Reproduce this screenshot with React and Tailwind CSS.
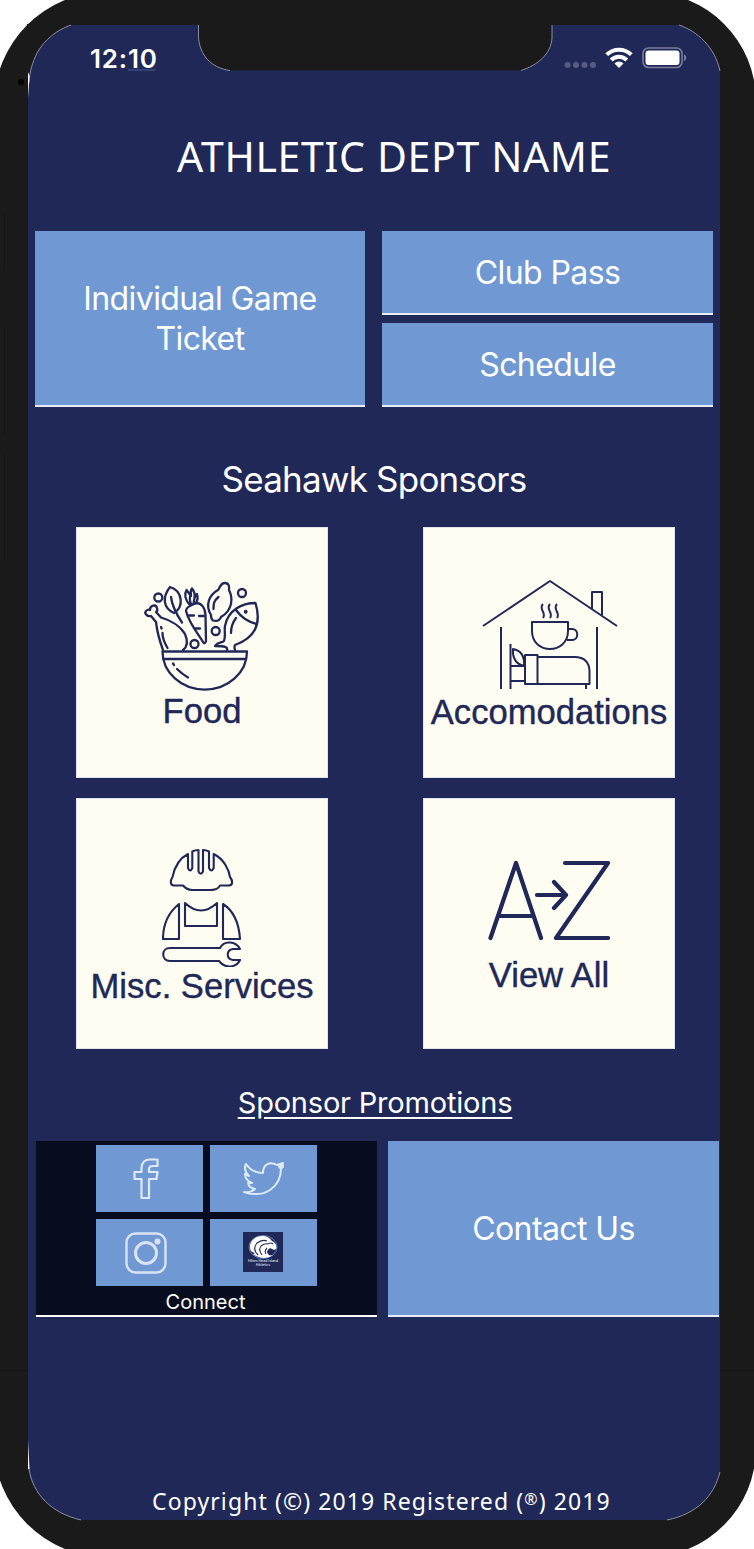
import clsx from 'clsx'

function StatusBar() {
  return (
    <div className="flex h-[85px] items-start justify-between pl-[62px] pr-[33px]">
      <span className="mt-[15px] font-['Inter'] text-[26px] font-semibold leading-[38px] tracking-[0.8px]">12:10</span>
      <div className="mt-[22px] flex items-start">
        <svg width="32" height="22" viewBox="0 0 32 22" fill="#555c82">
          <circle cx="3.5" cy="18" r="3" />
          <circle cx="12" cy="18" r="3" />
          <circle cx="20.5" cy="18" r="3" />
          <circle cx="29" cy="18" r="3" />
        </svg>
        <svg className="ml-[9px]" width="28" height="22" viewBox="0 0 28 22" fill="none" stroke="#fff" strokeWidth="4">
          <path d="M1.700 7.700a17.500 17.500 0 0 1 24.600 0" />
          <path d="M6.200 13a11 11 0 0 1 15.600 0" />
          <path d="M14 21l-4.500-4.500a6.200 6.200 0 0 1 9 0z" fill="#fff" stroke="none" />
        </svg>
        <svg className="ml-[9px]" width="45" height="22" viewBox="0 0 45 22">
          <rect x="1" y="1" width="39" height="19.5" rx="5.5" fill="none" stroke="#797e9b" strokeWidth="1.6" />
          <rect x="3.5" y="3.5" width="34" height="14.5" rx="3" fill="#fff" />
          <path d="M42 7.5c3 1 3 5.500 0 6.500z" fill="#797e9b" />
        </svg>
      </div>
    </div>
  )
}

// Bezel corners, the notch and their light edge, drawn over the screen
function Bezel() {
  return (
    <svg className="pointer-events-none absolute left-0 top-0" width="754" height="1549" viewBox="0 0 754 1549">
      <g fill="#1a1a1a">
        <path d="M27 24H72L71 25C57 30 45 39 37 53C32 64 30 70 28 83H27z" />
        <path d="M721 24H679V25C697 31 715 47 720 71H721z" />
        <path d="M27 1469H28C32 1494 51 1513 81 1520V1521H27z" />
        <path d="M721 1472H720C714 1496 697 1514 667 1520V1521H721z" />
        <path d="M198.500 24V38C200 55 211 68 230 70.500H521C538 65 551 54 552 38V24z" />
      </g>
      <g fill="none" stroke="#8b8d9c" strokeWidth="1">
        <path d="M71 25C57 30 45 39 37 53C32 64 30 70 29 83" />
        <path d="M679 25C697 31 715 47 720 71" />
        <path d="M29 1469C33 1494 51 1513 81 1520" />
        <path d="M720 1472C714 1496 697 1514 667 1520" />
        <path d="M198.500 25V38C200 55 211 68 230 70.500" />
        <path d="M521 70.500C538 65 551 54 552 38V25" />
      </g>
      <path d="M28 72V98L29.500 76zM28 1440V1469H29.500z" fill="#fff" />
      <path d="M128 70H156" stroke="#3f5a94" strokeWidth="1" />
      <circle cx="21" cy="82" r="3" fill="#000" />
      <path d="M4.500 212V271M4.500 327V436M4.500 454V560M0 1370.500H28M720 1370.500H754" stroke="#151515" strokeWidth="1" />
    </svg>
  )
}

function Button({ children, className }) {
  return (
    <button
      className={clsx(
        "flex items-center justify-center border-b-2 border-[#e8edf5] bg-[#7099d4] pt-[2px] font-['Inter'] text-[32px] font-normal leading-[40px] tracking-[-0.6px] text-white",
        className
      )}
    >
      {children}
    </button>
  )
}

function Tile({ icon, label, className }) {
  return (
    <div className="flex h-[251px] w-[252px] flex-col items-center border border-[#dfe5ee] bg-[#fffdf2] text-[#202858]">
      {icon}
      <span
        className={clsx(
          "whitespace-nowrap font-['Liberation_Sans'] text-[34.6px] leading-[40px] [-webkit-text-stroke:0.4px_#202858]",
          className
        )}
      >
        {label}
      </span>
    </div>
  )
}

function FoodIcon() {
  return (
    <svg className="mt-[47px] shrink-0" width="150" height="116" viewBox="-3 10 150 116" fill="none" stroke="currentColor" strokeWidth="2.300" strokeLinecap="round" strokeLinejoin="round">
      <circle cx="28.300" cy="32.500" r="4" />
      <circle cx="112" cy="28" r="4" />
      <circle cx="85.700" cy="66" r="4" />
      <circle cx="64.500" cy="79" r="4" />
      {/* drumstick */}
      <path d="M33 85C30 77 27 66 26 57L21 51C17 52 14 48 16 46C18 44 20 45 20 45C20 40 26 39 27 43C28 46 26 47 26 47L31 52.500C40 55 50 61 55 69C58 76 57 82 53 85" />
      <path d="M31 62l0.600 1.500M32.500 68c0 5 2 10 5 15" />
      {/* leaf */}
      <path d="M40 22C32 32 33 43 44 48C54 42 53 26 40 22zM41 32C42 41 47 50 52 57.500" />
      {/* carrot */}
      <path d="M56 46C56 41 63 40 66 38C71 38 75 42 75.500 50L76 76Q75 80 73 77C67 67 59 58 56 46z" />
      <path d="M60 40C55 35 54 29 56.500 25L61 31C60 27 61 25 62 23.500C65 27 65 30 64.500 33L67 29C68 32 68 35 66 38M60.500 30C59 34 60 37 61.500 40M64.500 33L63.500 39M59 50.500h5M69 51h5M65 63.500h5" />
      {/* lemon */}
      <path d="M88 25C90 23 90 18 95 18C99 18 99.500 22 99 25C103 33 103 45 91 52C90 55 87 56.500 83 55.500C81 54 81 52 81 50C75 40 79 30 88 25zM88.500 32c-5 4-5 7-5 12" />
      {/* fish */}
      <path d="M97 85C98 82 95 81 85 81C88 77 92 78 94 76C96 70 94 66 95 61C98 45 112 38 125.500 38C131 56 127 72 105 80Q104 82 105 85M106 45C111 52 118 57 127 59M106 53C103 57 101 62 101 68" />
      <circle cx="115.700" cy="46.700" r="0.800" fill="currentColor" />
      {/* bowl */}
      <path d="M32.500 86.500H117A42.200 38 0 0 1 32.500 86.500zM33 94H116M43 98.500l1 1.500M47 104q5 5 11 8.500" />
    </svg>
  )
}

function HouseIcon() {
  return (
    <svg className="ml-[2px] mt-[47px] shrink-0" width="136" height="118" viewBox="0 0 136 118" fill="none" stroke="currentColor" strokeWidth="2" strokeLinejoin="round">
      <path d="M1 51L68 6L135 51M110 34V17H120V40M19 52V114M115 52V114" />
      <path d="M50 47H86V56C86 80 50 80 50 56zM86 54H90C97 54 97 65 90 65H85" />
      <path d="M61 29c-5 5 4 9 0 14M68 29c-5 5 4 9 0 14M75 29c-5 5 4 9 0 14" />
      <path d="M28.500 69V114M43 80H55.500V109H43zM55.500 82H94Q107 83 107.500 96V109H55.500M28.500 91H43M28.500 106H43M104 109V114M31 74Q43 76 42 91Q30 88 31 74z" />
    </svg>
  )
}

function WorkerIcon() {
  return (
    <svg className="ml-[2px] mt-[47px] shrink-0" width="82" height="121" viewBox="0 0 82 121" fill="none" stroke="currentColor" strokeWidth="2.100" strokeLinejoin="round">
      <path d="M26 8V22Q28.200 27 30.300 22V5.500Q33 4 36.500 4V25.500Q38.800 30 41 25.500V4Q44 4 47 5.500V22Q49.300 27 51.700 22V8C62 13 67 24 68 31C71 35 71 39 67 39.500H58C56 43 54 44 49 44H30C26 44 24 43 21 39.500H12C8 39 8 35 10.500 31C12 24 16 13 26 8z" />
      <path d="M17 58V93H1C1 77 7 66 17 58zM23 57Q39 72 55 57V80H23zM61 58V93H78C77 78 72 65 61 58z" />
      <path d="M58 102H8C-1 102-1 115 8 115H57C63 123 74 122 78 114H71C64 113 64 104 71 103H78C74 95 62 94 58 102z" />
    </svg>
  )
}

function AZIcon() {
  return (
    <svg className="mt-[59px] shrink-0" width="122" height="84" viewBox="0 0 122 84" fill="none" stroke="currentColor" strokeWidth="4.200" strokeLinecap="round" strokeLinejoin="round">
      <path d="M2.500 80L28 5L53 80M11 58H45M49 37H78M66 24L78 37L66 50M77 5H120L68 80H120" />
    </svg>
  )
}

function SocialLinks() {
  const tile = 'flex h-[67px] w-[107px] items-center justify-center bg-[#7099d4]'
  return (
    <div className="grid grid-cols-2 gap-x-[7px] gap-y-[7px]">
      <div className={tile}>
        <svg className="mr-2" width="26" height="42" viewBox="0 0 26 42" fill="none" stroke="#dfe8f5" strokeWidth="2.200" strokeLinejoin="round">
          <path d="M8.500 40V21H1.500V14H8.500V10Q9 1.500 17 1.500H24.500V8H20Q16 8 16 11V14H24.500L23.500 21H16V40z" />
        </svg>
      </div>
      <div className={tile}>
        <svg width="42" height="36" viewBox="0 0 42 36" fill="none" stroke="#dfe8f5" strokeWidth="2" strokeLinejoin="round">
          <path d="M3 3Q9 12 20 12C20 3 27 0 34 4L40 2L38 7C38 26 22 38 1 31Q8 32 12 28Q6 27 5 22H9Q2 19 2 13L6 15Q0 9 3 3z" />
          <circle cx="38" cy="5" r="2" fill="#e7edf7" />
        </svg>
      </div>
      <div className={tile}>
        <svg className="mr-2" width="42" height="42" viewBox="0 0 42 42" fill="none" stroke="#d9e3f3" strokeWidth="2.400">
          <rect x="1.500" y="1.500" width="39" height="39" rx="9" />
          <circle cx="21" cy="21" r="10.500" strokeWidth="3" />
          <circle cx="32.500" cy="9.500" r="3" fill="#d9e3f3" stroke="none" />
        </svg>
      </div>
      <div className={tile}>
        <div className="mb-px mr-px flex h-10 w-10 flex-col items-center bg-[#202858]">
          <svg className="mt-[3px] shrink-0" width="30" height="24" viewBox="0 0 30 24">
            <ellipse cx="15" cy="12" rx="14" ry="11.500" fill="#202858" stroke="#7099d4" strokeWidth="0.800" />
            <path d="M2.500 15C0 7 7 1 14 1C19 1 22 3 24 6C28 8 29 11 28 14C27 15 25 15 24 14C22 12 20 14 19 17C20 20 22 21 25 20C19 25 9 23 5 19Q6 19 7 18Q3 17 2.500 15z" fill="#fff" />
            <path d="M10 20Q4 14 9 8Q14 4 19 6M14 20Q10 15 13 11Q17 8 20 9M20 9Q23 7 25 9M18 19Q16 16 19 13" fill="none" stroke="#202858" strokeWidth="1.100" />
          </svg>
          <span className="text-center font-['Inter'] text-[3.500px] leading-[4px]">Hilton Head Island<br />Athletics</span>
        </div>
      </div>
    </div>
  )
}

export default function App() {
  return (
    <div className="relative h-[1549px] w-[754px] overflow-hidden bg-white">
      {/* Phone body runs slightly past the page on every side */}
      <div className="-ml-[6px] -mt-[8px] h-[1565px] w-[762px] rounded-l-[113px] rounded-r-[109px] bg-[#1a1a1a] pl-[34px] pt-[33px]">
        <div className="flex h-[1495px] w-[692px] flex-col bg-[#202858] text-white">
          <StatusBar />
          <h1 className="ml-[149px] mt-[18px] whitespace-nowrap font-['Noto_Sans'] text-[41px] leading-[56px] tracking-[0.65px]">ATHLETIC DEPT NAME</h1>

          <div className="ml-[7px] mt-[47px] flex gap-[17px]">
            <Button className="h-[176px] w-[330px]">Individual Game<br />Ticket</Button>
            <div className="flex flex-col gap-2">
              <Button className="h-[84px] w-[331px]">Club Pass</Button>
              <Button className="h-[84px] w-[331px]">Schedule</Button>
            </div>
          </div>

          <h2 className="mt-[48px] text-center font-['Inter'] text-[35px] leading-[48px] tracking-[-0.8px]">Seahawk Sponsors</h2>

          <div className="ml-[48px] mt-[24px] grid w-[599px] grid-cols-2 gap-x-[95px] gap-y-[20px]">
            <Tile icon={<FoodIcon />} label="Food" />
            <Tile icon={<HouseIcon />} label="Accomodations" className="-mt-px" />
            <Tile icon={<WorkerIcon />} label="Misc. Services" className="-mt-px" />
            <Tile icon={<AZIcon />} label="View All" className="mt-[13px]" />
          </div>

          <a className="mt-[34px] pl-[2px] text-center font-['Inter'] text-[29px] leading-[40px] tracking-[-0.2px] underline underline-offset-4">Sponsor Promotions</a>

          <div className="ml-2 mt-[18px] flex gap-[11px]">
            <div className="flex h-[176px] w-[341px] flex-col items-center border-b-2 border-white bg-[#070d1e] pt-1">
              <SocialLinks />
              <span className="mt-1 pr-[2px] font-['Inter'] text-[20px] leading-6">Connect</span>
            </div>
            <Button className="h-[176px] w-[331px]">Contact Us</Button>
          </div>

          <footer className="ml-[124px] mt-[168px] whitespace-nowrap font-['Noto_Sans'] text-[23px] leading-[32px] tracking-[1.1px]">
            Copyright (©) 2019 Registered (<span className="align-[5px] text-[16px] leading-none">®</span>) 2019
          </footer>
        </div>
      </div>
      <Bezel />
    </div>
  )
}
